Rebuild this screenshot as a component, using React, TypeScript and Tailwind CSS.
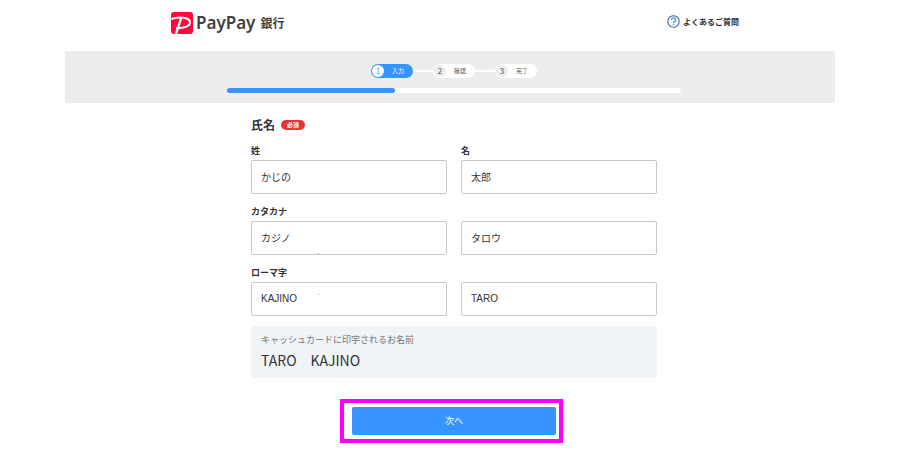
import { Fragment } from "react";
import clsx from "clsx";

const STEPS = ["入力", "確認", "完了"];

type Field = { id: string; label?: string; name: string; value: string };

const ROWS: Field[][] = [
  [
    { id: "sei", label: "姓", name: "姓", value: "かじの" },
    { id: "mei", label: "名", name: "名", value: "太郎" },
  ],
  [
    { id: "sei-kana", label: "カタカナ", name: "カタカナ", value: "カジノ" },
    { id: "mei-kana", name: "カタカナ 名", value: "タロウ" },
  ],
  [
    { id: "sei-roma", label: "ローマ字", name: "ローマ字", value: "KAJINO" },
    { id: "mei-roma", name: "ローマ字 名", value: "TARO" },
  ],
];

function Logo() {
  return (
    <div className="flex items-center text-[#443f40]">
      <svg viewBox="0 0 66 66" className="mr-[3px] size-[22px]" aria-hidden="true">
        <rect width="66" height="66" rx="9" fill="#ff0a3a" />
        <path
          d="M1 21C22 14 57 14 57 31C57 44 38 49 15 48"
          fill="none"
          stroke="#fff"
          strokeWidth="6"
        />
        <path d="M31 16L15 66" fill="none" stroke="#fff" strokeWidth="7" />
      </svg>
      <span className="font-['Noto_Sans',sans-serif] text-[17px] leading-6 font-semibold">
        PayPay
      </span>
      <span className="ml-[5px] text-[12px] leading-6 font-bold">銀行</span>
    </div>
  );
}

function Stepper({ current }: { current: number }) {
  return (
    <ol className="flex items-center justify-center">
      {STEPS.map((step, i) => (
        <Fragment key={step}>
          {i > 0 && <li aria-hidden="true" className="h-0.5 w-5 bg-white" />}
          <li
            className={clsx(
              "flex h-[14px] w-[42px] items-center rounded-full p-px text-[6px] leading-3",
              i === current ? "bg-[#3895ff] text-white" : "bg-white text-[#555]"
            )}
          >
            <span
              className={clsx(
                "flex size-3 shrink-0 items-center justify-center rounded-full text-[8px]",
                i === current ? "bg-white text-[#3895ff]" : "bg-[#ededed] text-[#555]"
              )}
            >
              {i + 1}
            </span>
            <span className="flex-1 text-center">{step}</span>
          </li>
        </Fragment>
      ))}
    </ol>
  );
}

function NameField({ id, label, name, value }: Field) {
  return (
    <div className="flex min-w-0 flex-col justify-end">
      {label && (
        <label htmlFor={id} className="h-[15px] text-[9px] leading-3 font-bold">
          {label}
        </label>
      )}
      <input
        id={id}
        type="text"
        aria-label={name}
        defaultValue={value}
        className="h-[34px] w-full rounded-[2px] border border-[#c8c8c8] bg-white px-[9px] pb-0.5 font-['Liberation_Sans','Noto_Sans_CJK_JP',sans-serif] text-[10px] text-[#333]"
      />
    </div>
  );
}

export default function App() {
  return (
    <div className="mx-auto min-h-screen max-w-[770px] bg-white font-['Noto_Sans_CJK_JP',sans-serif] text-[#333]">
      <header className="flex h-[51px] items-start justify-between pt-[11px] pr-24 pl-[106px]">
        <Logo />
        <a href="#faq" className="flex items-center gap-[3px] pt-1 text-[8px] leading-3 font-bold">
          <svg viewBox="0 0 24 24" className="size-[13px]" fill="none" aria-hidden="true">
            <circle cx="12" cy="12" r="10.5" stroke="#39639c" strokeWidth="2" />
            <path
              d="M8.2 9.3a3.8 3.8 0 1 1 6 3c-1.500 1-2.200 1.500-2.200 2.700"
              stroke="#3895ff"
              strokeWidth="2.500"
            />
            <circle cx="12" cy="18" r="1.500" fill="#3895ff" />
          </svg>
          よくあるご質問
        </a>
      </header>

      <div className="h-[52px] bg-[#ededed] pt-[13px] pl-2">
        <Stepper current={0} />
        <div className="mx-auto mt-[10px] h-[5px] max-w-[454px] rounded-full bg-white">
          <div className="h-full w-[37%] rounded-full bg-[#3895ff]" />
        </div>
      </div>

      <main className="pl-2">
        <form className="mx-auto max-w-[406px] pt-[14px]">
          <h1 className="flex items-center gap-[6px] text-[12px] leading-4 font-bold">
            氏名
            <span className="flex h-[10px] w-6 items-center justify-center rounded-full bg-[#e63535] text-[6px] text-white">
              必須
            </span>
          </h1>

          <div className="relative mt-3 flex flex-col gap-3">
            {ROWS.map((row) => (
              <div key={row[0].id} className="grid grid-cols-2 gap-[14px]">
                {row.map((field) => (
                  <NameField key={field.id} {...field} />
                ))}
              </div>
            ))}
            <i aria-hidden="true" className="absolute top-[108px] left-[67px] size-px bg-[#888]" />
            <i aria-hidden="true" className="absolute top-[149px] left-[67px] size-px bg-[#aaa]" />
          </div>

          <div className="mt-[10px] h-[52px] bg-[#f0f4f8] px-[10px] pt-[6px]">
            <p className="text-[9px] leading-4 text-[#777]">キャッシュカードに印字されるお名前</p>
            <p className="text-[14px] leading-6">TARO　KAJINO</p>
          </div>

          <div className="mx-auto mt-[21px] max-w-[228px] pr-[5px]">
            <div className="border-4 border-[#ff00ff] py-1 pr-[3px] pl-2">
              <button
                type="button"
                className="block h-7 w-full rounded-[2px] bg-[#3895ff] text-[9px] text-white"
              >
                次へ
              </button>
            </div>
          </div>
        </form>
      </main>
    </div>
  );
}
